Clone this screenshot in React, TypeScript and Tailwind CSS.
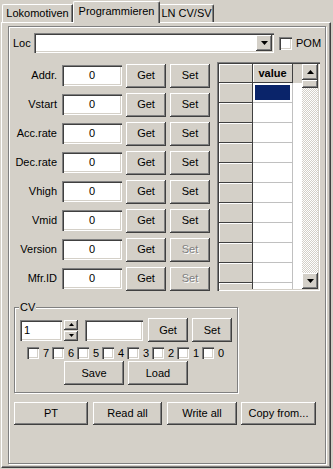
import React from "react";

const raised =
  "bg-[#d4d0c8] shadow-[inset_-1px_-1px_0_#404040,inset_1px_1px_0_#ffffff,inset_-2px_-2px_0_#808080]";
const sunken =
  "bg-white shadow-[inset_1px_1px_0_#808080,inset_2px_2px_0_#404040,inset_-1px_-1px_0_#ffffff,inset_-2px_-2px_0_#d4d0c8]";
const etched = "border border-[#808080] shadow-[inset_1px_1px_0_#ffffff,1px_1px_0_#ffffff]";

function Btn({ w, h = 24, label, disabled, className = "" }: { w: number; h?: number; label: string; disabled?: boolean; className?: string }) {
  return (
    <button
      className={`${raised} flex shrink-0 items-center justify-center leading-none ${
        disabled ? "text-[#808080] [text-shadow:1px_1px_0_#ffffff]" : "text-black"
      } ${className}`}
      style={{ width: w, height: h }}
    >
      {label}
    </button>
  );
}

function Tri({ up, w = 7, h = 4 }: { up?: boolean; w?: number; h?: number }) {
  const pts = up ? `${w / 2},0 ${w},${h} 0,${h}` : `0,0 ${w},0 ${w / 2},${h}`;
  return (
    <svg width={w} height={h} viewBox={`0 0 ${w} ${h}`}>
      <polygon points={pts} fill="#000" />
    </svg>
  );
}

function Box({ size = 12 }: { size?: number }) {
  return <div className={`${sunken} shrink-0`} style={{ width: size, height: size }} />;
}

const rows = [
  { label: "Addr.", set: true },
  { label: "Vstart", set: true },
  { label: "Acc.rate", set: true },
  { label: "Dec.rate", set: true },
  { label: "Vhigh", set: true },
  { label: "Vmid", set: true },
  { label: "Version", set: false },
  { label: "Mfr.ID", set: false },
];

function ValueTable() {
  const lines = Array.from({ length: 11 });
  return (
    <div className={`${sunken} ml-[7px] mt-[1px] flex h-[229px] w-[103px] p-[2px]`}>
      <div className="flex w-[83px] flex-col overflow-hidden">
        <div className="flex h-[19px] shrink-0 bg-[#d4d0c8]">
          <div className="w-[34px] border-b border-r border-[#404040] shadow-[inset_1px_1px_0_#ffffff]" />
          <div className="flex w-[40px] items-center justify-center border-b border-r border-[#404040] font-bold leading-none shadow-[inset_1px_1px_0_#ffffff]">
            value
          </div>
          <div className="flex-1" />
        </div>
        {lines.map((_, i) => (
          <div key={i} className="flex h-[20px] shrink-0">
            <div className="w-[34px] border-b border-r border-[#404040] bg-[#d4d0c8] shadow-[inset_1px_1px_0_#ffffff]" />
            <div className="flex w-[40px] border-b border-r border-[#c0c0c0] bg-white">
              {i === 0 && <div className="m-[2px] flex-1 bg-[#0a246a]" />}
            </div>
          </div>
        ))}
      </div>
      <div className="flex w-[16px] flex-col">
        <div className={`${raised} flex h-[16px] items-center justify-center`}>
          <Tri up />
        </div>
        <div className={`${raised} h-[8px]`} />
        <div className="flex-1 [background-image:repeating-conic-gradient(#d4d0c8_0%_25%,#ffffff_0%_50%)] [background-size:2px_2px]" />
        <div className={`${raised} flex h-[16px] items-center justify-center`}>
          <Tri />
        </div>
      </div>
    </div>
  );
}

export default function App() {
  return (
    <div className="h-[469px] w-[333px] overflow-hidden bg-[#d4d0c8] font-['Liberation_Sans',Arial,sans-serif] text-[11px] text-black">
      {/* tabs */}
      <div className="flex h-[22px] items-end pl-[2px]">
        <div className="flex h-[18px] w-[71px] items-center justify-center rounded-tl-[2px] border-l border-t border-r border-white border-r-[#404040] leading-none shadow-[inset_-1px_0_0_#808080]">
          Lokomotiven
        </div>
        <div className="relative z-10 -mb-[1px] flex h-[22px] w-[87px] items-center justify-center rounded-t-[2px] border-l border-t border-r border-white border-r-[#404040] bg-[#d4d0c8] pb-[3px] leading-none shadow-[inset_-1px_0_0_#808080]">
          Programmieren
        </div>
        <div className="flex h-[18px] w-[54px] items-center justify-center rounded-tr-[2px] border-t border-r border-white border-r-[#404040] leading-none shadow-[inset_-1px_0_0_#808080]">
          LN CV/SV
        </div>
      </div>

      {/* tab panel */}
      <div className="ml-[1px] h-[446px] w-[330px] border-l border-t border-r border-b border-white border-r-[#404040] border-b-[#404040] pl-[6px] pt-[3px] shadow-[inset_-1px_-1px_0_#808080]">
        <div className={`${etched} flex h-[438px] w-[318px] flex-col pt-[6px]`}>
          {/* loc row */}
          <div className="flex h-[20px] items-center pl-[4px]">
            <span className="w-[21px] leading-none">Loc</span>
            <div className={`${sunken} flex h-[20px] w-[240px] justify-end p-[2px]`}>
              <div className={`${raised} flex h-[16px] w-[16px] items-center justify-center`}>
                <Tri />
              </div>
            </div>
            <div className="ml-[5px]">
              <Box size={13} />
            </div>
            <span className="ml-[4px] leading-none">POM</span>
          </div>

          {/* parameter rows and table */}
          <div className="mt-[8px] flex">
            <div className="flex flex-col">
              {rows.map((r) => (
                <div key={r.label} className="flex h-[29px] items-center">
                  <span className="w-[48px] text-right leading-none">{r.label}</span>
                  <div className={`${sunken} ml-[5px] flex h-[21px] w-[60px] items-center justify-center leading-none`}>0</div>
                  <Btn w={40} label="Get" className="ml-[4px]" />
                  <Btn w={40} label="Set" disabled={!r.set} className="ml-[4px]" />
                </div>
              ))}
            </div>
            <ValueTable />
          </div>

          {/* CV group */}
          <div className={`${etched} relative ml-[5px] mt-[14px] h-[86px] w-[224px] pl-[5px] pt-[10px]`}>
            <span className="absolute -top-[7px] left-[4px] bg-[#d4d0c8] px-[1px] leading-[13px]">CV</span>
            <div className="flex h-[24px] items-center">
              <div className={`${sunken} flex h-[21px] w-[42px] items-center pl-[4px] leading-none`}>1</div>
              <div className="ml-[2px] flex flex-col gap-[1px]">
                <div className={`${raised} flex h-[10px] w-[14px] items-center justify-center`}>
                  <Tri up w={5} h={3} />
                </div>
                <div className={`${raised} flex h-[10px] w-[14px] items-center justify-center`}>
                  <Tri w={5} h={3} />
                </div>
              </div>
              <div className={`${sunken} ml-[7px] h-[21px] w-[58px]`} />
              <Btn w={40} label="Get" className="ml-[5px]" />
              <Btn w={40} label="Set" className="ml-[4px]" />
            </div>
            <div className="ml-[7px] mt-[5px] flex h-[12px] items-center">
              {["7", "6", "5", "4", "3", "2", "1", "0"].map((b) => (
                <div key={b} className="flex w-[25px] items-center">
                  <Box />
                  <span className="ml-[4px] leading-none">{b}</span>
                </div>
              ))}
            </div>
            <div className="mt-[2px] flex">
              <Btn w={60} label="Save" className="ml-[44px]" />
              <Btn w={60} label="Load" className="ml-[4px]" />
            </div>
          </div>

          {/* bottom buttons */}
          <div className="ml-[5px] mt-[9px] flex">
            <Btn w={74} h={23} label="PT" />
            <Btn w={69} h={23} label="Read all" className="ml-[5px]" />
            <Btn w={70} h={23} label="Write all" className="ml-[5px]" />
            <Btn w={75} h={23} label="Copy from..." className="ml-[4px]" />
          </div>
        </div>
      </div>
    </div>
  );
}
